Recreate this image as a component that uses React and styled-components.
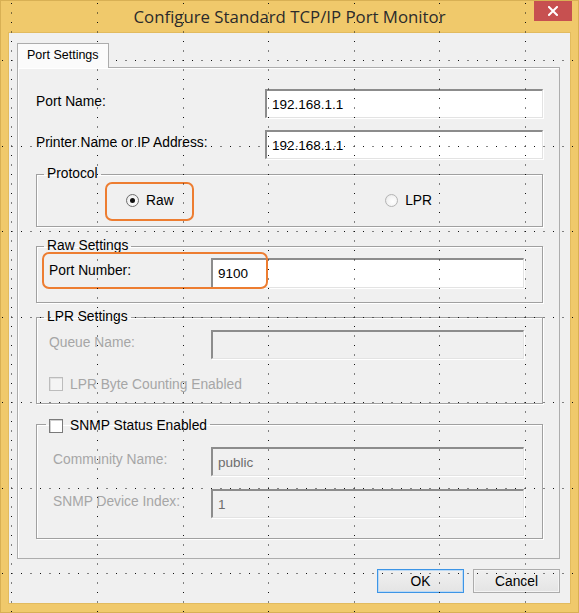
import React from 'react';
import styled, { createGlobalStyle } from 'styled-components';

const GlobalStyle = createGlobalStyle`
	html, body {
		margin: 0;
		padding: 0;
		background: #f0c96b;
	}
	body {
		font-family: "Liberation Sans", Arial, sans-serif;
		color: #000;
	}
	* {
		box-sizing: border-box;
	}
`;

const Window = styled.div`
	position: relative;
	width: 579px;
	height: 613px;
	background: #f0c96b;
	border: 1px solid #d8b054;
	display: flex;
	flex-direction: column;
	overflow: hidden;
`;

const TitleBar = styled.div`
	height: 32px;
	display: grid;
	grid-template-columns: 1fr auto 1fr;
	align-items: start;
`;

const Title = styled.div`
	grid-column: 2;
	line-height: 32px;
	font-family: "Open Sans", "Noto Sans", sans-serif;
	font-size: 16.8px;
	color: #2b2b2b;
	white-space: nowrap;
`;

const CloseButton = styled.div`
	grid-column: 3;
	justify-self: end;
	width: 38px;
	height: 21px;
	margin-right: 6px;
	margin-top: -1px;
	background: #c75050;
	display: flex;
	align-items: center;
	justify-content: center;
`;

const Client = styled.div`
	flex: 1;
	margin: 0 8px 9px;
	background: #f0f0f0;
	box-shadow: 0 0 0 1px #e2bb5f;
	padding: 10px 10px 0 8px;
	display: flex;
	flex-direction: column;
`;

const Tab = styled.div`
	align-self: flex-start;
	position: relative;
	z-index: 1;
	height: 25px;
	margin-bottom: -1px;
	padding: 0 9px 2px;
	display: flex;
	align-items: center;
	background: #fbfbfb;
	border: 1px solid #acacac;
	border-bottom: none;
	font-size: 12.5px;
`;

const TabPanel = styled.div`
	border: 1px solid #adadad;
	box-shadow: inset 1px 1px 0 #fff;
	padding: 21px 16px 19px 18px;
	display: flex;
	flex-direction: column;
`;

const FieldRow = styled.div`
	position: relative;
	display: grid;
	grid-template-columns: ${(p) => p.$cols};
	align-items: center;
	margin-top: ${(p) => p.$mt || 0}px;
	padding-left: ${(p) => p.$indent || 0}px;
`;

const Label = styled.span`
	font-size: 13.8px;
	padding-bottom: 5px;
	color: ${(p) => (p.$disabled ? '#a6a6a6' : '#000')};
	white-space: nowrap;
`;

const TextBox = styled.div`
	height: ${(p) => p.$h || 29}px;
	display: flex;
	align-items: center;
	padding-left: 5px;
	font-size: 13.5px;
	background: ${(p) => (p.$disabled ? '#f0f0f0' : '#fff')};
	color: ${(p) => (p.$disabled ? '#6d6d6d' : '#000')};
	border-top: 2px solid #8c8c8c;
	border-left: 2px solid #8c8c8c;
	border-right: 1px solid #e3e3e3;
	border-bottom: 1px solid #e3e3e3;
	box-shadow: 1px 1px 0 #fff;
`;

const Group = styled.fieldset`
	margin: ${(p) => p.$mt}px 0 0;
	padding: 0;
	min-width: 0;
	border: 1px solid #a0a0a0;
	box-shadow: inset 1px 1px 0 #fff, 1px 1px 0 #fff;
`;

const Legend = styled.legend`
	margin-left: ${(p) => p.$ml}px;
	padding: ${(p) => p.$pt || 0}px 3px 0;
	font-size: 13.8px;
	line-height: 16px;
	color: #000;
	display: flex;
	align-items: center;
	gap: 7px;
`;

const GroupBody = styled.div`
	padding: ${(p) => p.$pad};
	display: flex;
	flex-direction: column;
`;

const RadioRow = styled.div`
	display: flex;
	justify-content: space-between;
	padding: 0 110px 0 89px;
	height: 16px;
`;

const RadioItem = styled.label`
	position: relative;
	display: flex;
	align-items: center;
	gap: 7px;
	font-size: 13.8px;
`;

const RadioCircle = styled.span`
	width: 13px;
	height: 13px;
	border-radius: 50%;
	border: 1px solid ${(p) => (p.$checked ? '#6e6e6e' : '#b4b4b4')};
	background: radial-gradient(circle at 60% 60%, #ffffff 0%, #f2f2f2 60%, #dcdcdc 100%);
	display: flex;
	align-items: center;
	justify-content: center;

	&::after {
		content: '';
		width: 5px;
		height: 5px;
		border-radius: 50%;
		background: ${(p) => (p.$checked ? '#111' : 'transparent')};
	}
`;

const CheckRow = styled.label`
	display: flex;
	align-items: center;
	gap: 7px;
	height: 16px;
	margin-top: ${(p) => p.$mt || 0}px;
	font-size: 13.8px;
	color: ${(p) => (p.$disabled ? '#a6a6a6' : '#000')};
`;

const CheckBox = styled.span`
	width: 14px;
	height: 14px;
	background: ${(p) => (p.$disabled ? '#f4f4f4' : '#fff')};
	border: 1px solid ${(p) => (p.$disabled ? '#bcbcbc' : '#7a7a7a')};
	box-shadow: inset 1px 1px 0 ${(p) => (p.$disabled ? '#e2e2e2' : '#d0d0d0')};
`;

const Highlight = styled.span`
	position: absolute;
	left: ${(p) => p.$x}px;
	top: ${(p) => p.$y}px;
	width: ${(p) => p.$w}px;
	height: ${(p) => p.$h}px;
	border: 2px solid #ed7d31;
	border-radius: 7px;
	pointer-events: none;
`;

const Footer = styled.div`
	display: flex;
	justify-content: flex-end;
	gap: 9px;
	margin-top: 10px;
	padding-right: 0;
`;

const Button = styled.div`
	width: 87px;
	height: 24px;
	display: flex;
	align-items: center;
	justify-content: center;
	font-size: 13.8px;
	background: linear-gradient(#f0f0f0, #e4e4e4);
	border: 1px solid ${(p) => (p.$default ? '#3d95e6' : '#acacac')};
	box-shadow: inset 0 0 0 1px ${(p) => (p.$default ? '#bcdaf5' : '#f4f4f4')};
`;

const GridOverlay = styled.svg`
	position: absolute;
	left: -1px;
	top: -1px;
	pointer-events: none;
`;

const gridXs = [11, 97, 183, 268, 354, 439, 525];
const gridYs = [60, 146, 231, 317, 402, 488, 573];

function DotGrid() {
	return (
		<GridOverlay width='579' height='613' viewBox='0 0 579 613'>
			{gridXs.map((x) => (
				<line key={'v' + x} x1={x + 0.5} y1='3' x2={x + 0.5} y2='613' stroke='#111' strokeWidth='1' strokeDasharray='1 8.5' />
			))}
			{gridYs.map((y) => (
				<line key={'h' + y} x1='2' y1={y + 0.5} x2='574' y2={y + 0.5} stroke='#111' strokeWidth='1' strokeDasharray='1 8.5' />
			))}
		</GridOverlay>
	);
}

export default function App() {
	return (
		<>
			<GlobalStyle />
			<Window>
				<TitleBar>
					<Title>Configure Standard TCP/IP Port Monitor</Title>
					<CloseButton>
						<svg width='10' height='10' viewBox='0 0 10 10'>
							<path d='M1 1 L9 9 M9 1 L1 9' stroke='#fff' strokeWidth='2' strokeLinecap='square' />
						</svg>
					</CloseButton>
				</TitleBar>

				<Client>
					<Tab>Port Settings</Tab>
					<TabPanel>
						<FieldRow $cols='1fr 278px'>
							<Label>Port Name:</Label>
							<TextBox>192.168.1.1</TextBox>
						</FieldRow>
						<FieldRow $cols='1fr 278px' $mt={12}>
							<Label>Printer Name or IP Address:</Label>
							<TextBox>192.168.1.1</TextBox>
						</FieldRow>

						<Group $mt={7}>
							<Legend $ml={7}>Protocol</Legend>
							<GroupBody $pad='10px 0 18px'>
								<RadioRow>
									<RadioItem>
										<RadioCircle $checked />
										Raw
										<Highlight $x={-21} $y={-10} $w={89} $h={39} />
									</RadioItem>
									<RadioItem>
										<RadioCircle />
										LPR
									</RadioItem>
								</RadioRow>
							</GroupBody>
						</Group>

						<Group $mt={11}>
							<Legend $ml={7}>Raw Settings</Legend>
							<GroupBody $pad='4px 18px 14px 12px'>
								<FieldRow $cols='162px 1fr'>
									<Label>Port Number:</Label>
									<TextBox $h={30}>9100</TextBox>
									<Highlight $x={-7} $y={-6} $w={226} $h={37} />
								</FieldRow>
							</GroupBody>
						</Group>

						<Group $mt={6}>
							<Legend $ml={7}>LPR Settings</Legend>
							<GroupBody $pad='5px 18px 11px 12px'>
								<FieldRow $cols='162px 1fr'>
									<Label $disabled>Queue Name:</Label>
									<TextBox $disabled />
								</FieldRow>
								<CheckRow $disabled $mt={17}>
									<CheckBox $disabled />
									LPR Byte Counting Enabled
								</CheckRow>
							</GroupBody>
						</Group>

						<Group $mt={10}>
							<Legend $ml={9} $pt={4}>
								<CheckBox />
								SNMP Status Enabled
							</Legend>
							<GroupBody $pad='13px 18px 20px 12px'>
								<FieldRow $cols='158px 1fr' $indent={4}>
									<Label $disabled>Community Name:</Label>
									<TextBox $disabled>public</TextBox>
								</FieldRow>
								<FieldRow $cols='158px 1fr' $indent={4} $mt={13}>
									<Label $disabled>SNMP Device Index:</Label>
									<TextBox $disabled>1</TextBox>
								</FieldRow>
							</GroupBody>
						</Group>
					</TabPanel>

					<Footer>
						<Button $default>OK</Button>
						<Button>Cancel</Button>
					</Footer>
				</Client>
				<DotGrid />
			</Window>
		</>
	);
}
